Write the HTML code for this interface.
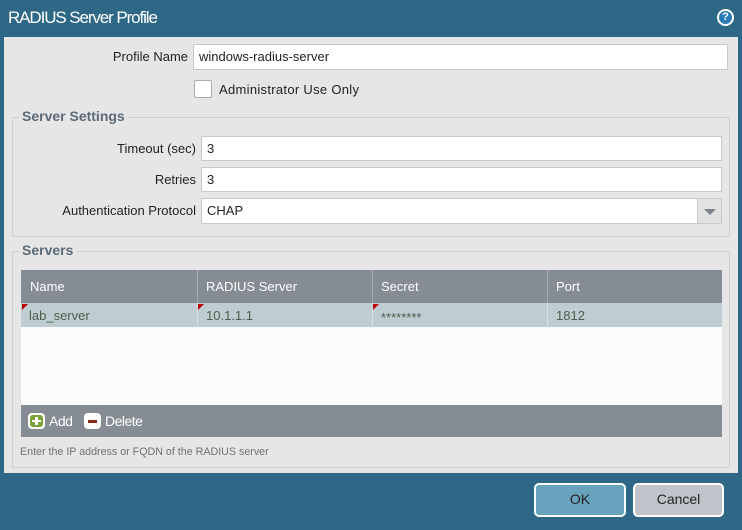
<!DOCTYPE html>
<html><head><meta charset="utf-8"><style>
*{box-sizing:border-box;margin:0;padding:0}
body{width:742px;height:530px;background:#2e6886;font-family:"Liberation Sans",sans-serif;position:relative;overflow:hidden;font-size:13px;color:#222}
.abs{position:absolute}
.title{left:8px;top:8px;color:#fff;font-size:17px;letter-spacing:-1.1px}
.help{left:717px;top:9px;width:17px;height:17px;border-radius:50%;background:#2a7bb8;border:2px solid #fff;color:#fff;font-weight:bold;font-size:11px;text-align:center;line-height:13px}
.panel{left:4px;top:37px;width:734px;height:436px;background:#e6e6e6}
.lbl{text-align:right;font-size:13px}
.inp{background:#fff;border:1px solid #c9c9c9;font-size:13px;padding-left:5px;line-height:23px}
.fs{border:1px solid #cfcfcf;border-radius:2px}
.leg{background:#e6e6e6;color:#5c6a78;font-weight:bold;font-size:14px;padding:0 3px}
.th{color:#fff;font-size:13px;line-height:33px;padding-left:8px;border-left:1px solid #a8adb3}
.td{color:#4b5e4b;font-size:13px;line-height:24px;padding-left:8px;border-left:1px solid #d6dfe2}
.flag{width:0;height:0;border-top:6px solid #b00;border-right:6px solid transparent}
.btn{border:2px solid #fff;border-radius:5px;text-align:center;line-height:28px;font-size:14px;color:#222}
</style></head><body>
<div class="abs title">RADIUS Server Profile</div>
<div class="abs help">?</div>
<div class="abs panel"></div>

<div class="abs lbl" style="left:40px;top:49px;width:148px">Profile Name</div>
<div class="abs inp" style="left:193px;top:44px;width:535px;height:26px">windows-radius-server</div>
<div class="abs" style="left:194px;top:80px;width:18px;height:18px;background:#fff;border:1px solid #aaa;border-radius:2px"></div>
<div class="abs" style="left:219px;top:82px;letter-spacing:0.3px">Administrator Use Only</div>

<div class="abs fs" style="left:12px;top:117px;width:718px;height:120px"></div>
<div class="abs leg" style="left:19px;top:108px">Server Settings</div>
<div class="abs lbl" style="left:40px;top:141px;width:156px">Timeout (sec)</div>
<div class="abs inp" style="left:201px;top:136px;width:521px;height:25px">3</div>
<div class="abs lbl" style="left:40px;top:172px;width:156px">Retries</div>
<div class="abs inp" style="left:201px;top:167px;width:521px;height:25px">3</div>
<div class="abs lbl" style="left:20px;top:203px;width:176px">Authentication Protocol</div>
<div class="abs inp" style="left:201px;top:198px;width:497px;height:26px">CHAP</div>
<div class="abs" style="left:697px;top:198px;width:25px;height:26px;background:#e2e2e2;border:1px solid #c9c9c9"><div style="margin:10px auto 0;width:0;height:0;border-left:6px solid transparent;border-right:6px solid transparent;border-top:6px solid #7a8590"></div></div>

<div class="abs fs" style="left:12px;top:251px;width:718px;height:217px"></div>
<div class="abs leg" style="left:19px;top:242px">Servers</div>
<div class="abs" style="left:21px;top:270px;width:701px;height:167px;background:#fbfbfb"></div>
<div class="abs" style="left:21px;top:270px;width:701px;height:33px;background:#858c93"></div>
<div class="abs th" style="left:21px;top:270px;border-left:1px solid #858c93">Name</div>
<div class="abs th" style="left:197px;top:270px;width:176px">RADIUS Server</div>
<div class="abs th" style="left:372px;top:270px;width:176px">Secret</div>
<div class="abs th" style="left:547px;top:270px;width:175px">Port</div>
<div class="abs" style="left:21px;top:303px;width:701px;height:24px;background:#bfcdd2"></div>
<div class="abs td" style="left:21px;top:304px;border-left:none">lab_server</div>
<div class="abs td" style="left:197px;top:304px;width:176px">10.1.1.1</div>
<div class="abs td" style="left:372px;top:304px;width:176px"><span style="position:relative;top:2px">********</span></div>
<div class="abs td" style="left:547px;top:304px;width:175px">1812</div>
<div class="abs flag" style="left:22px;top:304px"></div>
<div class="abs flag" style="left:198px;top:304px"></div>
<div class="abs flag" style="left:373px;top:304px"></div>
<div class="abs" style="left:21px;top:405px;width:701px;height:32px;background:#858c93"></div>
<div class="abs" style="left:28px;top:413px;width:17px;height:16px;background:#fff;border-radius:4px"><div style="position:absolute;left:2px;top:2px;width:13px;height:12px;background:#7ba13a;border-radius:3px"></div><div style="position:absolute;left:7px;top:4px;width:3px;height:8px;background:#fff"></div><div style="position:absolute;left:4px;top:7px;width:9px;height:2px;background:#fff"></div></div>
<div class="abs" style="left:49px;top:413px;color:#fff;font-size:14px;letter-spacing:-0.5px">Add</div>
<div class="abs" style="left:84px;top:413px;width:17px;height:16px;background:#fff;border-radius:4px"><div style="position:absolute;left:4px;top:7px;width:9px;height:3px;background:#8a2a1a"></div></div>
<div class="abs" style="left:105px;top:413px;color:#fff;font-size:14px;letter-spacing:-0.5px">Delete</div>
<div class="abs" style="left:20px;top:446px;font-size:10.7px;color:#707070">Enter the IP address or FQDN of the RADIUS server</div>

<div class="abs btn" style="left:534px;top:483px;width:92px;height:34px;background:#68a2bc">OK</div>
<div class="abs btn" style="left:633px;top:483px;width:91px;height:34px;background:#c0c3ca">Cancel</div>
</body></html>
